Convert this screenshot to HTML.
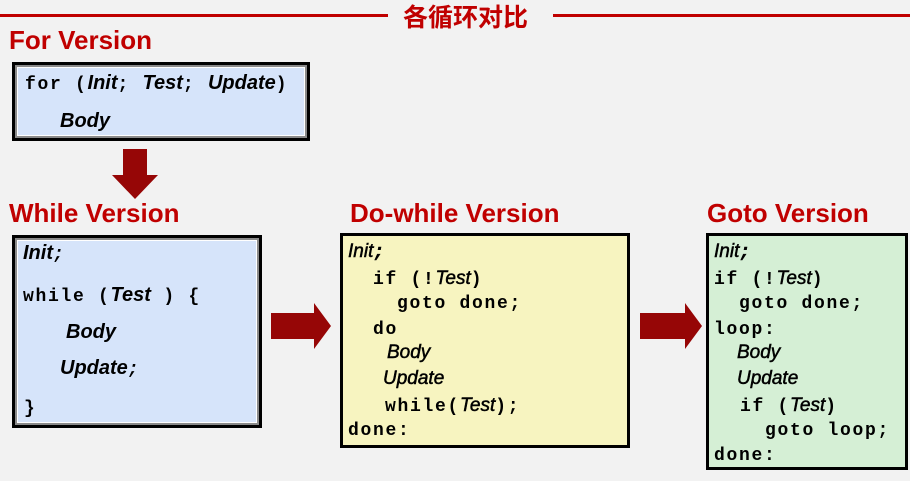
<!DOCTYPE html>
<html><head><meta charset="utf-8"><style>
body{margin:0;width:910px;height:481px;background:#f2f2f2;position:relative;overflow:hidden;font-family:"Liberation Sans",sans-serif}
.a{position:absolute}
.h{position:absolute;color:#c00000;font-weight:bold;font-size:26px;line-height:28px;white-space:nowrap}
.box{position:absolute;box-sizing:border-box;border:3px solid #000}
.box.in{box-shadow:inset 0 0 0 2px #8a8a8a, inset 0 0 0 3px #fff}
.l{position:absolute;line-height:20px;height:20px;white-space:nowrap;color:#000}
.m{font-family:"Liberation Mono",monospace;font-weight:bold;font-size:18px;letter-spacing:1.7px}
.l.m{margin-top:2px}
.i{font-family:"Liberation Sans",sans-serif;font-style:italic;font-weight:bold;font-size:20px;letter-spacing:0}
.n{font-family:"Liberation Sans",sans-serif;font-style:italic;font-weight:normal;font-size:19px;letter-spacing:0;-webkit-text-stroke:0.5px #000}
</style></head><body>
<div class="a" style="left:0;top:14px;width:388px;height:3px;background:#c00000"></div>
<div class="a" style="left:553px;top:14px;width:357px;height:3px;background:#c00000"></div>
<div class="h" style="left:403px;top:3px;font-family:'Liberation Sans','Noto Sans CJK SC',sans-serif;font-size:25px;line-height:30px">各循环对比</div>

<div class="h" style="left:9px;top:26px">For Version</div>
<div class="box in" style="left:12px;top:62px;width:298px;height:79px;background:#d6e4fa"></div>
<div class="l m" style="left:25px;top:71px">for (<span class="i">Init</span>; <span class="i">Test</span>; <span class="i">Update</span>)</div>
<div class="l i" style="left:60px;top:111px">Body</div>

<svg class="a" style="left:112px;top:148px" width="46" height="52"><path d="M9 1H33V27H44L21 51L-2 27H9Z" fill="#960606" transform="translate(2,0)"/></svg>

<div class="h" style="left:9px;top:199px">While Version</div>
<div class="h" style="left:350px;top:199px">Do-while Version</div>
<div class="h" style="left:707px;top:199px">Goto Version</div>

<div class="box in" style="left:12px;top:235px;width:250px;height:193px;background:#d6e4fa"></div>
<div class="l i" style="left:23px;top:243px">Init<span class="m">;</span></div>
<div class="l m" style="left:23px;top:283px">while (<span class="i">Test</span> ) {</div>
<div class="l i" style="left:66px;top:322px">Body</div>
<div class="l i" style="left:60px;top:358px">Update<span class="m">;</span></div>
<div class="l m" style="left:24px;top:397px">}</div>

<svg class="a" style="left:270px;top:303px" width="62" height="46"><path d="M1 10H44V0L61 23L44 46V36H1Z" fill="#960606"/></svg>
<svg class="a" style="left:639px;top:303px" width="64" height="46"><path d="M1 10H46V0L63 23L46 46V36H1Z" fill="#960606"/></svg>

<div class="box" style="left:340px;top:233px;width:290px;height:215px;background:#f7f4c0"></div>
<div class="l n" style="left:348px;top:242px">Init<span class="m">;</span></div>
<div class="l m" style="left:373px;top:267px">if (!<span class="n">Test</span>)</div>
<div class="l m" style="left:397px;top:292px">goto done;</div>
<div class="l m" style="left:373px;top:318px">do</div>
<div class="l n" style="left:387px;top:343px">Body</div>
<div class="l n" style="left:383px;top:369px">Update</div>
<div class="l m" style="left:385px;top:394px">while(<span class="n">Test</span>);</div>
<div class="l m" style="left:348px;top:419px">done:</div>

<div class="box" style="left:706px;top:233px;width:202px;height:237px;background:#d5efd5"></div>
<div class="l n" style="left:714px;top:242px">Init<span class="m">;</span></div>
<div class="l m" style="left:714px;top:267px">if (!<span class="n">Test</span>)</div>
<div class="l m" style="left:739px;top:292px">goto done;</div>
<div class="l m" style="left:714px;top:318px">loop:</div>
<div class="l n" style="left:737px;top:343px">Body</div>
<div class="l n" style="left:737px;top:369px">Update</div>
<div class="l m" style="left:740px;top:394px">if (<span class="n">Test</span>)</div>
<div class="l m" style="left:765px;top:419px">goto loop;</div>
<div class="l m" style="left:714px;top:444px">done:</div>
</body></html>
